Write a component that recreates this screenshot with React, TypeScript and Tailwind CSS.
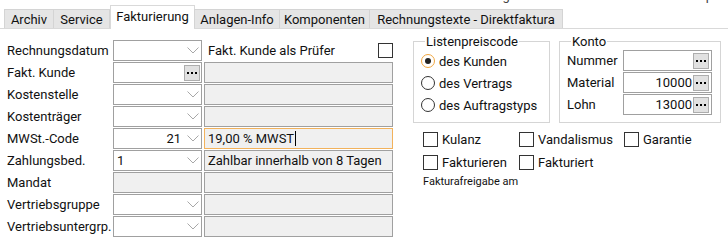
import React from 'react'

const tabs = [
  { label: 'Archiv', w: 'w-[50px]' },
  { label: 'Service', w: 'w-[57px]' },
  { label: 'Fakturierung', w: 'w-[85px]', active: true },
  { label: 'Anlagen-Info', w: 'w-[86px]' },
  { label: 'Komponenten', w: 'w-[91px]' },
  { label: 'Rechnungstexte - Direktfaktura', w: 'w-[194px]' },
]

const Chevron = () => (
  <svg width="12" height="7" viewBox="0 0 12 7" className="shrink-0">
    <polyline points="0.5,0.5 6,6 11.5,0.5" fill="none" stroke="#a8a8a8" strokeWidth="1" />
  </svg>
)

const DotsButton = () => (
  <span className="flex h-[16px] w-[16px] shrink-0 items-center justify-center border border-[#adadad] bg-[#e1e1e1]">
    <svg width="10" height="2" viewBox="0 0 10 2">
      <rect x="0" y="0" width="2" height="2" fill="#000" />
      <rect x="4" y="0" width="2" height="2" fill="#000" />
      <rect x="8" y="0" width="2" height="2" fill="#000" />
    </svg>
  </span>
)

type BoxProps = {
  grey?: boolean
  focus?: boolean
  chevron?: boolean
  dots?: boolean
  value?: string
  right?: boolean
  caret?: boolean
}

function Box({ grey, focus, chevron, dots, value, right, caret }: BoxProps) {
  return (
    <div
      className={`flex h-[21px] items-center border pl-[3px] pr-[1px] ${
        focus ? 'border-[#f2b25c]' : 'border-[#a0a0a0]'
      } ${grey ? 'bg-[#f0f0f0]' : 'bg-white'}`}
    >
      <span className={`flex flex-1 items-center whitespace-nowrap ${right ? 'justify-end pr-[6px]' : ''}`}>
        {value}
        {caret && <span className="ml-[1px] inline-block h-[15px] w-[1px] bg-black" />}
      </span>
      {chevron && (
        <span className="pr-[1px]">
          <Chevron />
        </span>
      )}
      {dots && <DotsButton />}
    </div>
  )
}

const CheckBox = () => <span className="inline-block h-[15px] w-[15px] shrink-0 border border-[#333] bg-white" />

const rows: { label: string; first: BoxProps; second: BoxProps }[] = [
  { label: 'Fakt. Kunde', first: { dots: true }, second: { grey: true } },
  { label: 'Kostenstelle', first: { chevron: true }, second: { grey: true } },
  { label: 'Kostenträger', first: { chevron: true }, second: { grey: true } },
  { label: 'MWSt.-Code', first: { chevron: true, value: '21', right: true }, second: { grey: true, focus: true, value: '19,00 % MWST', caret: true } },
  { label: 'Zahlungsbed.', first: { chevron: true, value: '1' }, second: { grey: true, value: 'Zahlbar innerhalb von 8 Tagen' } },
  { label: 'Mandat', first: { grey: true }, second: { grey: true } },
  { label: 'Vertriebsgruppe', first: { chevron: true }, second: { grey: true } },
  { label: 'Vertriebsuntergrp.', first: { chevron: true }, second: { grey: true } },
]

const radios = [
  { label: 'des Kunden', checked: true },
  { label: 'des Vertrags' },
  { label: 'des Auftragstyps' },
]

const konto = [
  { label: 'Nummer', value: '' },
  { label: 'Material', value: '10000' },
  { label: 'Lohn', value: '13000' },
]

export default function App() {
  return (
    <div className="h-[242px] w-[728px] overflow-hidden bg-white font-[Roboto,sans-serif] text-[13px] leading-[15px] text-[#111]">
      {/* header line, scrolled mostly out of view */}
      <div className="h-[6px] overflow-hidden">
        <div className="-mt-[12px] flex whitespace-nowrap text-[#444]">
          <span className="ml-[415px]">Letzte Änderung: 01.03.2021</span>
          <span className="ml-[45px]">durch Klaus Spitzenberger</span>
        </div>
      </div>

      {/* tabs */}
      <div className="flex h-[23px] items-end border-b border-[#d9d9d9] pl-[4px]">
        {tabs.map((t) =>
          t.active ? (
            <div
              key={t.label}
              className={`${t.w} -mb-px flex h-[24px] items-start justify-center border border-b-0 border-[#d9d9d9] bg-white pt-[3px]`}
            >
              {t.label}
            </div>
          ) : (
            <div
              key={t.label}
              className={`${t.w} -ml-px flex h-[19px] items-center justify-center border border-b-0 border-[#d4d4d4] bg-[#e5e5e5] pt-[1px] first:ml-0`}
            >
              {t.label}
            </div>
          )
        )}
      </div>

      <div className="flex items-start pl-[7px] pt-[5px]">
        {/* left form */}
        <div className="mt-[6px] grid auto-rows-[21px] grid-cols-[104px_89px_189px] gap-x-[2px] gap-y-[1px]">
          <div className="flex items-center whitespace-nowrap">Rechnungsdatum</div>
          <Box chevron />
          <div className="flex items-center justify-between pl-[4px]">
            <span>Fakt. Kunde als Prüfer</span>
            <CheckBox />
          </div>
          {rows.map((r) => (
            <React.Fragment key={r.label}>
              <div className="flex items-center whitespace-nowrap">{r.label}</div>
              <Box {...r.first} />
              <Box {...r.second} />
            </React.Fragment>
          ))}
        </div>

        {/* right side */}
        <div className="ml-[20px] flex flex-col">
          <div className="flex">
            <fieldset className="w-[137px] border border-[#d5d5d5] pb-[6px] pl-[7px] pt-[1px]">
              <legend className="ml-[4px] px-[1px]">Listenpreiscode</legend>
              {radios.map((r) => (
                <div key={r.label} className="flex h-[22px] items-center gap-[4px] whitespace-nowrap">
                  {r.checked ? (
                    <span className="flex h-[14px] w-[14px] items-center justify-center rounded-full border border-[#f0a640] bg-white">
                      <span className="h-[6px] w-[6px] rounded-full bg-[#222]" />
                    </span>
                  ) : (
                    <span className="h-[14px] w-[14px] rounded-full border border-[#333] bg-white" />
                  )}
                  <span>{r.label}</span>
                </div>
              ))}
            </fieldset>
            <fieldset className="ml-[9px] w-[162px] border border-[#d5d5d5] pb-[6px] pl-[7px] pr-[8px] pt-[1px]">
              <legend className="ml-[4px] px-[1px]">Konto</legend>
              <div className="flex flex-col gap-[1px]">
                {konto.map((k) => (
                  <div key={k.label} className="flex items-center justify-between">
                    <span>{k.label}</span>
                    <div className="flex h-[21px] w-[89px] items-center border border-[#a0a0a0] bg-white pr-[2px]">
                      <span className="flex-1 pr-[1px] text-right">{k.value}</span>
                      <DotsButton />
                    </div>
                  </div>
                ))}
              </div>
            </fieldset>
          </div>

          <div className="ml-[10px] mt-[9px] grid grid-cols-[96px_105px_auto] gap-y-[8px]">
            {['Kulanz', 'Vandalismus', 'Garantie', 'Fakturieren', 'Fakturiert'].map((c) => (
              <div key={c} className="flex h-[15px] items-center gap-[4px] whitespace-nowrap">
                <CheckBox />
                <span>{c}</span>
              </div>
            ))}
          </div>
          <div className="ml-[10px] mt-[5px] text-[11px] leading-[13px]">Fakturafreigabe am</div>
        </div>
      </div>
    </div>
  )
}
